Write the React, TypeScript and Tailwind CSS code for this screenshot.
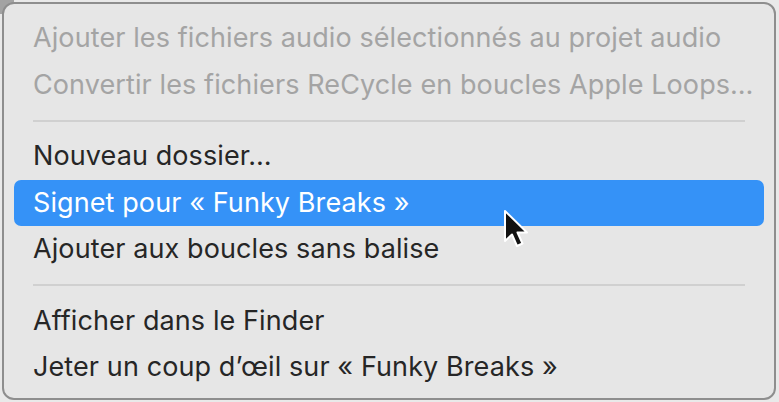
import React from 'react';

type Item = { label: string; disabled?: boolean; active?: boolean } | 'sep';

const items: Item[] = [
  { label: 'Ajouter les fichiers audio sélectionnés au projet audio', disabled: true },
  { label: 'Convertir les fichiers ReCycle en boucles Apple Loops…', disabled: true },
  'sep',
  { label: 'Nouveau dossier…' },
  { label: 'Signet pour « Funky Breaks »', active: true },
  { label: 'Ajouter aux boucles sans balise' },
  'sep',
  { label: 'Afficher dans le Finder' },
  { label: 'Jeter un coup d’œil sur « Funky Breaks »' },
];

function Cursor() {
  return (
    <svg className="absolute left-[502px] top-[209px]" width="32" height="44" viewBox="0 0 32 44">
      <path
        d="M3 2 L3 32 L10 25.5 L15 37 L20.5 34.5 L15.5 23.5 L25 23.5 Z"
        fill="#111"
        stroke="#fff"
        strokeWidth="2"
        strokeLinejoin="round"
      />
    </svg>
  );
}

export default function App() {
  return (
    <div className="relative h-[402px] w-[779px] overflow-hidden bg-[#e9e9e9] pl-[2px] pt-[2px]">
      <div className="absolute left-0 top-0 h-[14px] w-[14px] bg-[#a3a3a3]" />
      <div className="relative flex h-[398px] w-[774px] flex-col rounded-[12px] border-2 border-[#8e8e8e] bg-[#e6e6e6] px-[10px] pt-[11px] font-['Inter',sans-serif] text-[27px] tracking-[0.1px]">
        {items.map((it, i) =>
          it === 'sep' ? (
            <div key={i} className="flex h-[25px] items-center px-[19px]">
              <div className="h-[2px] w-full bg-[#d0d0d0]" />
            </div>
          ) : (
            <div
              key={i}
              className={`flex h-[46.5px] items-center whitespace-nowrap rounded-[7px] px-[19px] ${
                it.active ? 'bg-[#3592f7] text-white' : it.disabled ? 'text-[#a4a4a4]' : 'text-[#262626]'
              }`}
            >
              {it.label}
            </div>
          )
        )}
      </div>
      <Cursor />
    </div>
  );
}
